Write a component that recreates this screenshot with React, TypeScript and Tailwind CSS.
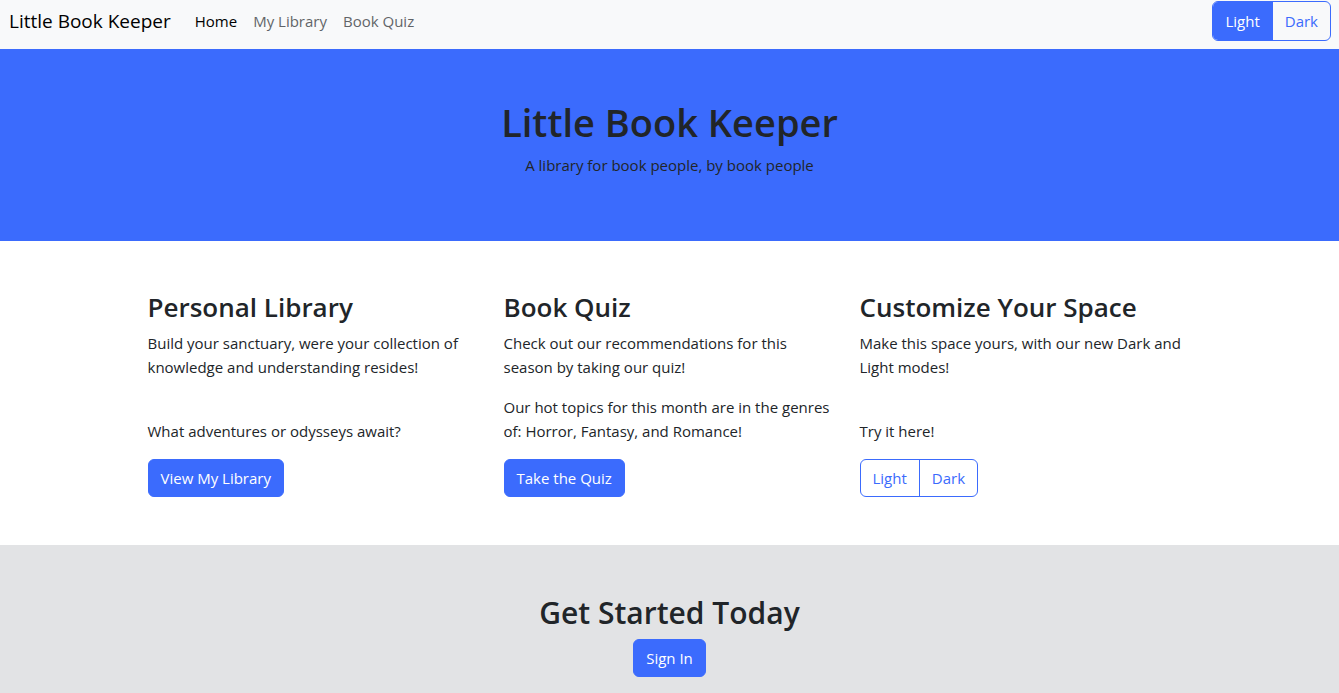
import { useState } from "react";
import type { ReactNode } from "react";

type Theme = "light" | "dark";

const primaryLink =
  "inline-block rounded-md border border-[#3b6bfd] bg-[#3b6bfd] px-3 py-[6px] leading-6 text-white hover:bg-[#325bd7]";

function ThemeSwitch({
  label,
  active,
  height,
  onPick,
}: {
  label: string;
  active: Theme | null;
  height: string;
  onPick: (theme: Theme) => void;
}) {
  const tone = (on: boolean) => (on ? "bg-[#3b6bfd] text-white" : "text-[#3b6bfd]");
  return (
    <div
      role="group"
      aria-label={label}
      className={`inline-flex overflow-hidden rounded-md border border-[#3b6bfd] ${height}`}
    >
      <button
        type="button"
        aria-pressed={active === "light"}
        onClick={() => onPick("light")}
        className={`px-3 leading-6 ${tone(active === "light")}`}
      >
        Light
      </button>
      <button
        type="button"
        aria-pressed={active === "dark"}
        onClick={() => onPick("dark")}
        className={`border-l border-[#3b6bfd] px-3 leading-6 ${tone(active === "dark")}`}
      >
        Dark
      </button>
    </div>
  );
}

function Feature({
  title,
  intro,
  detail,
  children,
}: {
  title: string;
  intro: string;
  detail: string;
  children: ReactNode;
}) {
  return (
    <article className="flex flex-col items-start">
      <h2 className="mb-1.5 text-[26px] leading-9 font-semibold">{title}</h2>
      <p className="mb-4">{intro}</p>
      <p className="mt-auto mb-4">{detail}</p>
      {children}
    </article>
  );
}

export default function App() {
  const [theme, setTheme] = useState<Theme>("light");
  const dark = theme === "dark";

  return (
    <div
      className={`min-h-screen font-['Segoe_UI','Open_Sans',sans-serif] text-[15px] leading-6 ${
        dark ? "bg-[#212529] text-[#dee2e6]" : "bg-white text-[#212529]"
      }`}
    >
      <nav
        className={`flex items-start justify-between pt-px pr-2 pb-2 pl-[9px] ${
          dark ? "bg-[#2b3035]" : "bg-[#f8f9fa]"
        }`}
      >
        <div className="flex h-10 items-center">
          <a href="#" className={`mr-6 text-[19px] ${dark ? "text-white" : "text-black"}`}>
            Little Book Keeper
          </a>
          <ul className="flex gap-4">
            <li>
              <a href="#" aria-current="page" className={dark ? "text-white" : "text-black"}>
                Home
              </a>
            </li>
            <li>
              <a href="#library" className="opacity-70">
                My Library
              </a>
            </li>
            <li>
              <a href="#quiz" className="opacity-70">
                Book Quiz
              </a>
            </li>
          </ul>
        </div>
        <ThemeSwitch label="Theme" active={theme} height="h-10" onPick={setTheme} />
      </nav>

      <header className="bg-[#3b6bfd] p-12 text-center text-[#212529]">
        <h1 className="mb-1.5 text-[38px] leading-[50px] font-semibold">Little Book Keeper</h1>
        <p className="mb-4">A library for book people, by book people</p>
      </header>

      <main className="mx-auto grid max-w-[1140px] gap-6 p-12 md:grid-cols-3">
        <Feature
          title="Personal Library"
          intro="Build your sanctuary, were your collection of knowledge and understanding resides!"
          detail="What adventures or odysseys await?"
        >
          <a href="#library" className={primaryLink}>
            View My Library
          </a>
        </Feature>
        <Feature
          title="Book Quiz"
          intro="Check out our recommendations for this season by taking our quiz!"
          detail="Our hot topics for this month are in the genres of: Horror, Fantasy, and Romance!"
        >
          <a href="#quiz" className={primaryLink}>
            Take the Quiz
          </a>
        </Feature>
        <Feature
          title="Customize Your Space"
          intro="Make this space yours, with our new Dark and Light modes!"
          detail="Try it here!"
        >
          <ThemeSwitch label="Try a theme" active={null} height="h-[38px]" onPick={setTheme} />
        </Feature>
      </main>

      <section
        className={`px-12 pt-12 pb-4 text-center ${dark ? "bg-[#343a40]" : "bg-[#e2e3e5]"}`}
      >
        <h2 className="mb-1.5 text-[30px] leading-10 font-semibold">Get Started Today</h2>
        <a href="#sign-in" className={primaryLink}>
          Sign In
        </a>
      </section>
    </div>
  );
}
